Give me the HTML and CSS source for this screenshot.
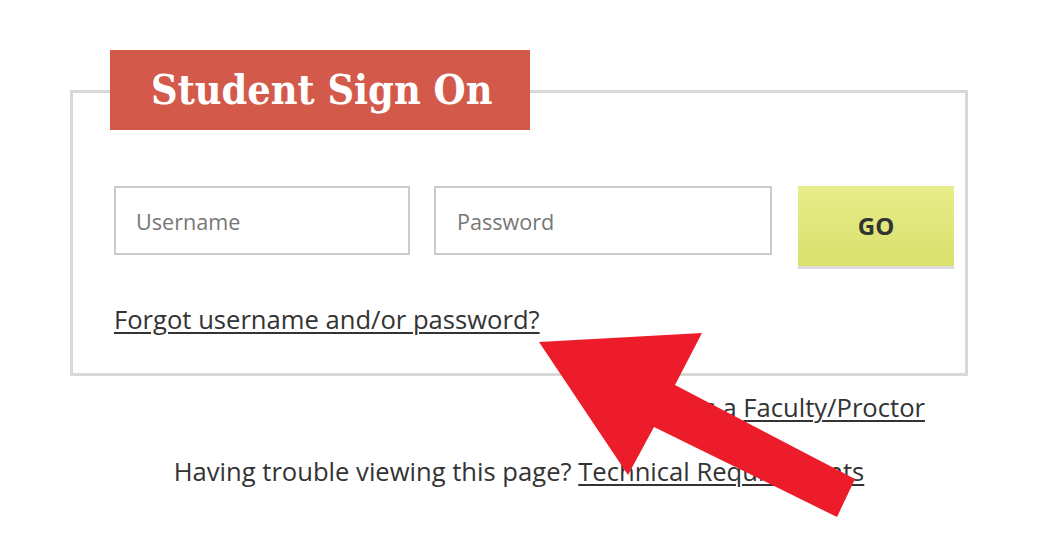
FILE: index.html
```html
<!DOCTYPE html>
<html>
<head>
<meta charset="utf-8">
<link rel="stylesheet" href="styles.css">
</head>
<body>
<div class="page">
  <div class="box">
    <h1 class="title">Student Sign On</h1>
    <div class="row">
      <div class="field user">Username</div>
      <div class="field pass">Password</div>
      <div class="go">GO</div>
    </div>
    <a class="forgot" href="#">Forgot username and/or password?</a>
  </div>
  <div class="below">
    <p class="faculty">Sign in as a <a href="#">Faculty/Proctor</a></p>
    <p class="trouble">Having trouble viewing this page? <a href="#">Technical Requirements</a></p>
  </div>
</div>
<svg class="arrow" width="1042" height="538" viewBox="0 0 1042 538">
  <polygon points="539,342 702,333 675,385 855,479 837,517 654,427 628,475" fill="#ec1c2a"/>
</svg>
</body>
</html>
```
FILE: styles.css
```css
html, body {
  margin: 0;
  padding: 0;
  background: #fff;
}
body {
  font-family: "Open Sans", "DejaVu Sans", sans-serif;
  color: #333;
  width: 1042px;
  height: 538px;
  overflow: hidden;
  position: relative;
}
.page {
  padding: 90px 0 0 70px;
}
.box {
  box-sizing: border-box;
  width: 898px;
  height: 286px;
  border: 3px solid #d8d8d8;
  padding: 0 11px 0 41px;
}
.title {
  width: 420px;
  box-sizing: border-box;
  height: 80px;
  margin: -43px 0 0 -4px;
  padding: 0 0 0 41px;
  background: #d35a4b;
  color: #fff;
  font-family: "DejaVu Serif", serif;
  font-stretch: condensed;
  font-weight: bold;
  font-size: 41px;
  line-height: 80px;
  white-space: nowrap;
}
.row {
  display: flex;
  margin-top: 56px;
  align-items: flex-start;
}
.field {
  box-sizing: border-box;
  height: 69px;
  border: 2px solid #cbcbcb;
  color: #777;
  font-size: 21.6px;
  line-height: 68px;
  padding-left: 20px;
}
.user { width: 296px; }
.pass { width: 338px; margin-left: 24px; padding-left: 21px; }
.go {
  box-sizing: border-box;
  width: 156px;
  height: 80px;
  margin-left: 26px;
  background: linear-gradient(#e7ed89, #d9e06c);
  box-shadow: 0 3px 0 #dcdcdc;
  text-align: center;
  font-weight: bold;
  font-size: 24px;
  line-height: 80px;
  color: #333;
}
.forgot {
  display: block;
  width: fit-content;
  margin-top: 39px;
  font-size: 25.6px;
  line-height: 30px;
  color: #333;
}
a { color: #333; text-decoration: underline; text-underline-offset: 3px; text-decoration-thickness: 2px; }
.below {
  width: 898px;
  box-sizing: border-box;
  padding-right: 43px;
  font-size: 25.6px;
}
.below p { margin: 0; line-height: 30px; }
.faculty { text-align: right; margin-top: 17px !important; }
.trouble { text-align: center; padding-left: 43px; margin-top: 34px !important; }
.arrow {
  position: absolute;
  left: 0;
  top: 0;
}
```
